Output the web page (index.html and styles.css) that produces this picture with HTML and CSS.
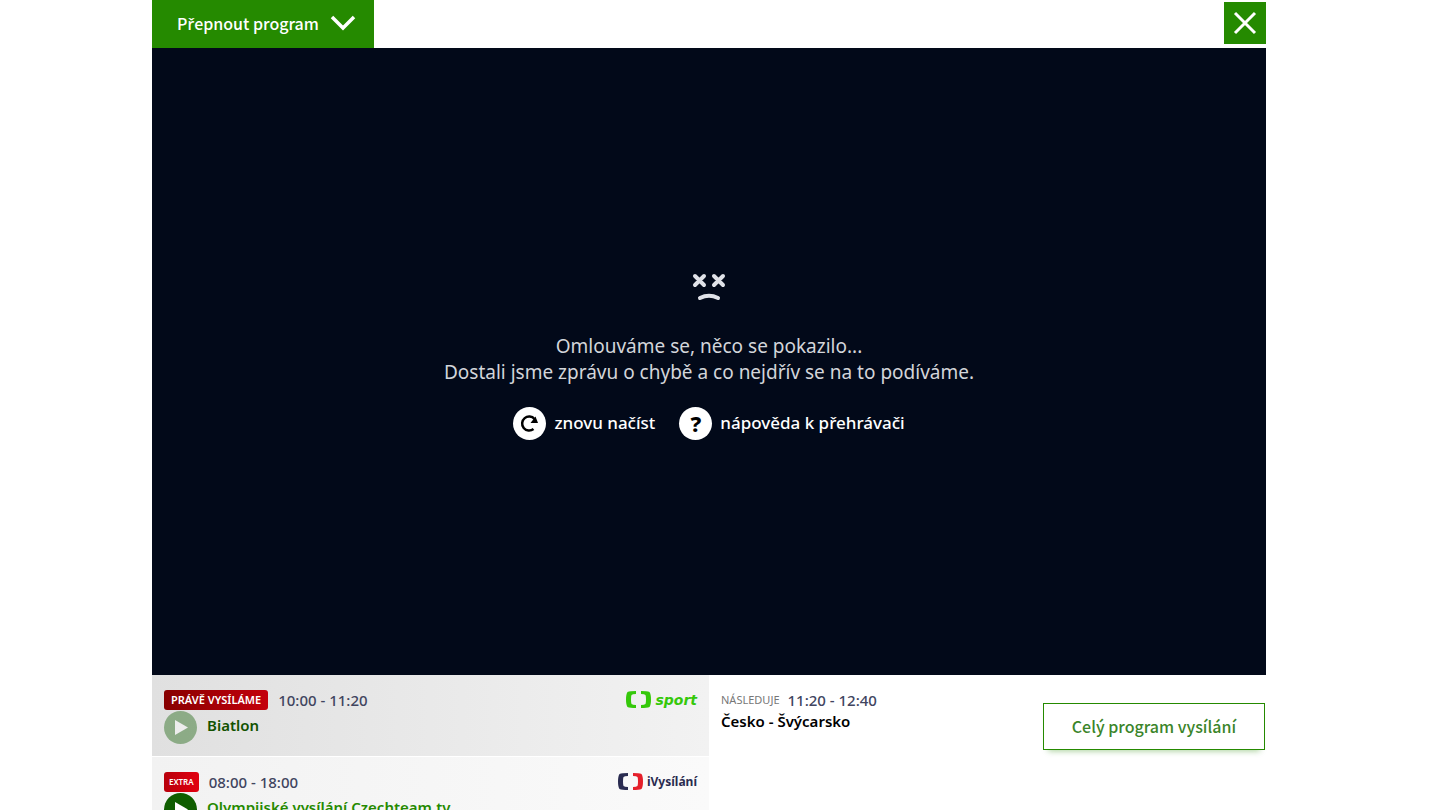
FILE: index.html
```html
<!DOCTYPE html>
<html lang="cs">

<head>
  <meta charset="UTF-8">
  <meta name="viewport" content="width=device-width, initial-scale=1">
  <title>Živé vysílání</title>
  <link rel="stylesheet" href="styles.css">
</head>

<body>
  <main class="live">
    <header class="live-header">
      <button type="button" class="switch-btn">
        <span>P<span class="caron">ř</span>epnout program</span>
        <svg class="switch-icon" viewBox="0 0 26 16" aria-hidden="true">
          <path d="M2 2l11 11L24 2" />
        </svg>
      </button>
      <button type="button" class="close-btn" aria-label="Zavřít">
        <svg class="close-icon" viewBox="0 0 24 24" aria-hidden="true">
          <path d="M2 2l20 20M22 2L2 22" />
        </svg>
      </button>
    </header>

    <!-- Player with error message -->
    <section class="player">
      <svg class="sad-face" viewBox="0 0 34 28" aria-hidden="true">
        <path d="M3 3l9 9M12 3l-9 9M22 3l9 9M31 3l-9 9" />
        <path class="mouth" d="M8 25Q17 20.500 26 25" />
      </svg>
      <p class="player-text">
        Omlouváme se, něco se pokazilo...<br>
        Dostali jsme zprávu o chybě a co nejdřív se na to podíváme.
      </p>
      <div class="player-actions">
        <button type="button" class="player-btn">
          <svg class="player-icon" viewBox="0 0 33 33" aria-hidden="true">
            <circle cx="16.500" cy="16.500" r="16.500" />
            <path class="reload" d="M20.500 22A7 7 0 1 1 21.500 12" />
            <path d="M22.500 9.500l2.500 6.500h-7.500z" />
          </svg>
          znovu načíst
        </button>
        <a href="#" class="player-btn">
          <span class="help-icon" aria-hidden="true">?</span>
          nápověda k přehrávači
        </a>
      </div>
    </section>

    <!-- Programme -->
    <section class="schedule">
      <div class="now">
        <article class="show show-active">
          <div class="show-info">
            <div class="show-meta">
              <span class="badge">PRÁVĚ VYSÍLÁME</span>
              <time class="show-time">10:00 - 11:20</time>
            </div>
            <a href="#" class="show-link">
              <svg class="play" viewBox="0 0 33 33" aria-hidden="true">
                <circle cx="16.500" cy="16.500" r="16.500" />
                <path d="M11 9l13 7.500L11 24z" />
              </svg>
              <span class="show-title">Biatlon</span>
            </a>
          </div>
          <div class="channel channel-sport">
            <svg class="channel-logo" viewBox="0 0 25 17" aria-hidden="true">
              <path d="M10 0Q4 0 1.500 1Q0 3 0 8.500T1.500 16Q4 17 10 17V14Q6.500 14 5.500 13Q5 12 5 8.500T5.500 4Q6.500 3 10 3z" />
              <path class="logo-right" d="M15 0Q21 0 23.500 1Q25 3 25 8.500T23.500 16Q21 17 15 17V14Q18.500 14 19.500 13Q20 12 20 8.500T19.500 4Q18.500 3 15 3z" />
            </svg>
            <span>sport</span>
          </div>
        </article>

        <article class="show">
          <div class="show-info">
            <div class="show-meta">
              <span class="badge badge-extra">EXTRA</span>
              <time class="show-time">08:00 - 18:00</time>
            </div>
            <a href="#" class="show-link">
              <svg class="play" viewBox="0 0 33 33" aria-hidden="true">
                <circle cx="16.500" cy="16.500" r="16.500" />
                <path d="M11 9l13 7.500L11 24z" />
              </svg>
              <span class="show-title">Olympijské vysílání Czechteam.tv</span>
            </a>
          </div>
          <div class="channel channel-ivysilani">
            <svg class="channel-logo" viewBox="0 0 25 17" aria-hidden="true">
              <path d="M10 0Q4 0 1.500 1Q0 3 0 8.500T1.500 16Q4 17 10 17V14Q6.500 14 5.500 13Q5 12 5 8.500T5.500 4Q6.500 3 10 3z" />
              <path class="logo-right" d="M15 0Q21 0 23.500 1Q25 3 25 8.500T23.500 16Q21 17 15 17V14Q18.500 14 19.500 13Q20 12 20 8.500T19.500 4Q18.500 3 15 3z" />
            </svg>
            <span>iVysílání</span>
          </div>
        </article>
      </div>

      <div class="next">
        <div class="next-info">
          <div class="next-meta">
            <span class="next-label">NÁSLEDUJE</span>
            <time class="show-time">11:20 - 12:40</time>
          </div>
          <h2 class="next-title">Česko - Švýcarsko</h2>
        </div>
        <a href="#" class="program-btn">Celý program vysílání</a>
      </div>
    </section>
  </main>
</body>

</html>
```

FILE: styles.css
```css
* {
  box-sizing: border-box;
}

body {
  margin: 0;
  height: 100vh;
  overflow: hidden;
  padding: 0 22px 0 0;
  background-color: #fff;
  font-family: "Noto Sans", "Open Sans", sans-serif;
  color: #000;
}

button {
  border: none;
  padding: 0;
  font: inherit;
  cursor: pointer;
}

a {
  color: inherit;
  text-decoration: none;
}

.live {
  max-width: 1114px;
  margin: 0 auto;
}

/* Header */
.live-header {
  display: flex;
  justify-content: space-between;
  align-items: center;
  height: 48px;
}

.switch-btn {
  display: flex;
  align-items: center;
  gap: 11px;
  height: 48px;
  padding: 0 18px 2px 25px;
  background-color: #258a00;
  color: #fff;
  font-family: "Noto Sans CJK SC", "Noto Sans", sans-serif;
  font-size: 16px;
  font-weight: 500;
}

/* The CJK font has no r with caron */
.caron {
  font-family: "Noto Sans", sans-serif;
}

.switch-icon {
  width: 26px;
  height: 16px;
  fill: none;
  stroke: #fff;
  stroke-width: 3.5;
}

.close-btn {
  display: flex;
  align-items: center;
  justify-content: center;
  width: 42px;
  height: 42px;
  margin-bottom: 2px;
  background-color: #258a00;
}

.close-icon {
  width: 24px;
  height: 24px;
  fill: none;
  stroke: #fff;
  stroke-width: 3;
}

/* Player */
.player {
  display: flex;
  flex-direction: column;
  align-items: center;
  justify-content: center;
  aspect-ratio: 16 / 9;
  padding-bottom: 10px;
  background-color: #020919;
  color: #fff;
}

.sad-face {
  width: 34px;
  height: 28px;
  fill: none;
  stroke: #e0e2e8;
  stroke-width: 4;
  stroke-linecap: round;
}

.player-text {
  margin: 32px 0 22px;
  color: #d3d5da;
  font-size: 19px;
  line-height: 26px;
  text-align: center;
}

.player-actions {
  display: flex;
  gap: 24px;
}

.player-btn {
  display: flex;
  align-items: center;
  gap: 8px;
  background: none;
  color: #fff;
  font-size: 17px;
  font-weight: 500;
  line-height: 24px;
}

.player-icon {
  width: 33px;
  height: 33px;
}

.player-icon circle {
  fill: #fff;
}

.player-icon .reload {
  fill: none;
  stroke: #000;
  stroke-width: 2.5;
}

.help-icon {
  width: 33px;
  border-radius: 50%;
  background-color: #fff;
  color: #000;
  font-size: 22px;
  font-weight: 800;
  line-height: 33px;
  text-align: center;
}

/* Programme */
.schedule {
  display: grid;
  grid-template-columns: 1fr 1fr;
}

.show {
  display: flex;
  justify-content: space-between;
  align-items: flex-start;
  margin-bottom: 1px;
  padding: 14px 12px 12px;
  background: linear-gradient(to right, #f2f2f2, #fafafa);
}

.show-active {
  background: linear-gradient(to right, #e0e0e0, #f2f2f2);
}

.show-meta {
  display: flex;
  align-items: center;
  gap: 10px;
  height: 22px;
}

.badge {
  padding: 0 7px;
  border-radius: 3px;
  background: linear-gradient(to right, #870000, #c4000c);
  color: #fff;
  font-size: 11px;
  font-weight: 600;
  line-height: 20px;
}

.badge-extra {
  padding: 0 5px;
  background: linear-gradient(to right, #b8000c, #e2000f);
  font-size: 8px;
}

.show-time {
  color: #41455f;
  font-size: 15px;
  font-weight: 500;
  line-height: 20px;
}

.show-link {
  display: flex;
  align-items: center;
  gap: 10px;
  color: #258a00;
}

.play {
  width: 33px;
  height: 33px;
  fill: #0f5d00;
}

.play path {
  fill: #fff;
}

.show-title {
  padding-bottom: 4px;
  font-size: 15px;
  font-weight: 600;
  line-height: 20px;
}

.show-active .show-link {
  color: #125200;
}

.show-active .play {
  opacity: 0.4;
}

.channel {
  display: flex;
  align-items: center;
  gap: 4px;
  height: 22px;
}

.channel-logo {
  width: 25px;
  height: 17px;
}

.channel-sport {
  color: #35c80a;
  fill: #35c80a;
  font-family: "DejaVu Sans", sans-serif;
  font-size: 14px;
  font-style: italic;
  font-weight: 700;
}

.channel-ivysilani {
  color: #292b50;
  fill: #292b50;
  font-size: 12px;
  font-weight: 700;
}

.channel-ivysilani .logo-right {
  fill: #e5202b;
}

.next {
  display: flex;
  justify-content: space-between;
  align-items: flex-start;
  padding: 14px 1px 0 12px;
}

.next-meta {
  display: flex;
  align-items: center;
  gap: 8px;
  height: 22px;
}

.next-label {
  color: #777;
  font-size: 11px;
}

.next-title {
  margin: 0;
  font-size: 15px;
  font-weight: 600;
  line-height: 20px;
}

.program-btn {
  margin-top: 14px;
  padding: 0 28px;
  border: 1px solid #258a00;
  box-shadow: 0 6px 6px -5px rgba(37, 138, 0, 0.4);
  color: #3b852a;
  font-family: "Noto Sans CJK SC", "Noto Sans", sans-serif;
  font-size: 16px;
  font-weight: 500;
  line-height: 45px;
}
```
